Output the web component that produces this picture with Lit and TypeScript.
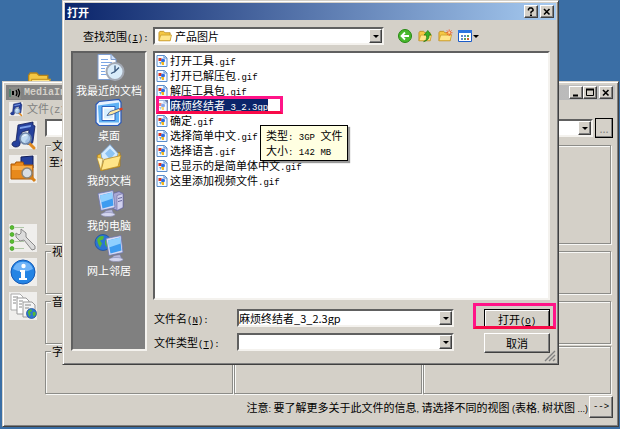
import { LitElement, html, css, svg, nothing } from "lit";
import { customElement, state } from "lit/decorators.js";

const FILES = [
  "打开工具.gif",
  "打开已解压包.gif",
  "解压工具包.gif",
  "麻烦终结者_3_2.3gp",
  "确定.gif",
  "选择简单中文.gif",
  "选择语言.gif",
  "已显示的是简单体中文.gif",
  "这里添加视频文件.gif",
];

const pic = (size: string, box: string, body: unknown) =>
  html`<svg class=${size} viewBox=${box} aria-hidden="true">${body}</svg>`;

const folderShape = svg`
  <path d="M1 3.500 2 2h4l1.500 1.500H13V12H1z" fill="#f4c744" stroke="#b58418" stroke-width=".8"/>
  <path d="M1 12 3 6h11.500L13 12z" fill="#ffe58a" stroke="#c99a28" stroke-width=".8"/>`;

const noteShape = svg`
  <path d="M9 4 24 1v3l2 1-2 15a4 3 0 0 1-6 3 4 3 0 0 1 1-5l1-9-7 2-2 12a4 3 0 0 1-7 2 4 3 0 0 1 3-5z" fill="#26419c" stroke="#101c58" stroke-width=".8"/>
  <path d="m11 6 11-2-.4 2-10.800 2z" fill="#7ea2ec"/>
  <path d="m20 22 5 5" stroke="#e08a20" stroke-width="3" stroke-linecap="round"/>
  <circle cx="16.500" cy="17.500" r="5.500" fill="#b8d8f4" fill-opacity=".85" stroke="#6e86a8" stroke-width="1.600"/>
  <path d="M13.500 16a4 4 0 0 1 4-2" stroke="#fff" fill="none"/>`;

const globeShape = (cx: number, cy: number, r: number) => svg`
  <circle cx=${cx} cy=${cy} r=${r} fill="#2c74d4" stroke="#174a98" stroke-width=".7"/>
  <path transform="translate(${cx - r} ${cy - r}) scale(${r / 8})" d="M2 5c2-4 6-4 7-3l-1 3-3 1 2 3-2 4-2-4zM10 6l4-1 1 4-3 4-2-3z" fill="#54b838"/>`;

const monitorShape = svg`
  <path d="m12 22 6-1 2 5-8 1-3-2z" fill="#b7b9dc" stroke="#70749c" stroke-width=".6"/>
  <ellipse cx="14" cy="26" rx="7" ry="2" fill="#d4d6ee" stroke="#8488b0" stroke-width=".6"/>
  <path d="m4 5 15-3 2 17L7 22z" fill="#d5daf4" stroke="#6d76ae" stroke-width=".8"/>
  <path d="m6 7 12-3 1.500 13L8.500 20z" fill="#3d9cf0"/>
  <path d="m6 7 12-3 .7 6L7 14z" fill="#8fd0ff"/>`;

const PLACES = [
  {
    label: "我最近的文档",
    icon: svg`
      <path d="M4 1h13l5 5v20H4z" fill="#fff" stroke="#7c9cd0"/>
      <path d="M17 1v5h5" fill="#cfe0fa" stroke="#7c9cd0"/>
      <path d="M7 6h7M7 9h11M7 12h8M7 15h4M7 18h4M7 21h5" stroke="#7ca6e4"/>
      <circle cx="21" cy="18" r="8.500" fill="#d9ecfa" stroke="#a3a9b4" stroke-width="2"/>
      <path d="M21 12v6l4-4M21 18l-4 2" stroke="#37567c" stroke-width="1.300" fill="none"/>`,
  },
  {
    label: "桌面",
    icon: svg`
      <path d="m2 6 3-3 20-2 2 3v20l-3 3H5l-3-3z" fill="#e6f2ff" stroke="#2858b8" stroke-width="1.200"/>
      <path d="m4 7 21-3v20H5z" fill="#5fb2f4"/>
      <path d="M9 9h11v12H9z" fill="#d8f0ff" stroke="#fff" stroke-width="2"/>
      <path d="M8 8h13v14H8z" fill="none" stroke="#2a62c0"/>
      <path d="m13 17 3-4 9-3 2 2-9 4z" fill="#ffe9a0" stroke="#2c4f94" stroke-width=".8"/>
      <path d="m25 10 3-1 1 2-3 1z" fill="#e03c20"/>`,
  },
  {
    label: "我的文档",
    icon: svg`
      <path d="m3 12 6-3 3 2 14-2v14L7 27z" fill="#f0c040" stroke="#a87818" stroke-width=".8"/>
      <path d="m7 10 9-9 8 9-3 10-12 2z" fill="#d4ebff" stroke="#6f9cd0" stroke-width=".8"/>
      <path d="m11 10 5-5 5 5-5 6z" fill="#8cc4f4"/>
      <path d="m7 27 3-11 17-4-3 11z" fill="#ffe588" stroke="#b98c24" stroke-width=".8"/>
      <path d="m7 27-4-13 6 1z" fill="#fff2b4" stroke="#b98c24" stroke-width=".6"/>`,
  },
  {
    label: "我的电脑",
    icon: svg`
      <path d="m19 5 6-2 4 2v14l-6 3-4-2z" fill="#a9a8d4" stroke="#65659c" stroke-width=".8"/>
      <path d="m23 7 6-2v14l-6 3z" fill="#d0d0ee" stroke="#65659c" stroke-width=".6"/>
      <path d="m24 10 4-1m-4 4 4-1" stroke="#65659c"/>
      ${monitorShape}`,
  },
  {
    label: "网上邻居",
    icon: svg`
      ${globeShape(9, 9, 8)}
      <g transform="translate(8 0)">${monitorShape}</g>`,
  },
];

@customElement("app-root")
export class AppRoot extends LitElement {
  @state() private selected = 3;

  static styles = css`
    :host {
      display: block;
      position: relative;
      min-height: 100vh;
      overflow: hidden;
      background: #3a6ea5;
      color: #000;
      font: 11px/14px "Noto Sans CJK SC", sans-serif;
    }
    * { box-sizing: border-box; }
    svg { display: block; flex: none; overflow: visible; }
    button, input, select { font: inherit; color: inherit; margin: 0; padding: 0; border-radius: 0; }
    .mono { font-family: "Liberation Mono", monospace; font-size: 9px; line-height: 9px; }
    .small { font-family: "Liberation Sans", sans-serif; font-size: 9px; line-height: 9px; }
    u { text-underline-offset: 1px; }

    .s12 { width: 12px; height: 12px; }
    .s14 { width: 14px; height: 14px; }
    .s28 { width: 28px; height: 28px; }
    .s30 { width: 30px; height: 30px; }
    .shortcut { position: absolute; left: 27px; top: 69px; width: 24px; height: 24px; }

    .frame {
      background: #d4d0c8;
      border: 1px solid;
      border-color: #d4d0c8 #404040 #404040 #d4d0c8;
      box-shadow: inset 1px 1px #fff, inset -1px -1px #808080;
    }
    .raised {
      display: grid;
      place-items: center;
      background: #d4d0c8;
      border: 1px solid;
      border-color: #fff #404040 #404040 #fff;
      box-shadow: inset -1px -1px #808080;
    }
    .sunken {
      background: #fff;
      border: 2px solid;
      border-color: #606060 #f4f2ee #f4f2ee #606060;
    }

    /* media window */
    .media { position: relative; margin: 81px 1px 0 2px; padding: 3px; }
    .bar { display: flex; align-items: center; }
    .bar h1, .bar h2 { flex: 1; margin: 0; font-size: 11px; white-space: nowrap; }
    .media .bar {
      height: 15px;
      gap: 3px;
      padding: 0 2px 0 3px;
      background: linear-gradient(90deg, #808080, #c0c0c0);
      color: #d4d0c8;
    }
    .media .bar h1 { font: bold 10px/14px "Liberation Mono", monospace; }
    .caption { width: 14px; height: 13px; }
    .captions { display: flex; }
    .captions .caption:last-child { margin-left: 2px; }
    .menu { display: flex; align-items: center; gap: 4px; height: 17px; padding-left: 3px; color: #808080; }
    .menu button { border: 0; background: none; white-space: nowrap; }
    .work { display: grid; grid-template-columns: 28px 1fr; gap: 8px; padding: 1px 2px 5px 3px; }
    .tools { display: flex; flex-direction: column; gap: 6px; padding-top: 3px; }
    .tools button { width: 28px; height: 28px; border: 0; background: #efeeec; }
    .tools .apart { margin-top: 35px; }
    .main { display: flex; flex-direction: column; gap: 2px; min-width: 0; }
    .path { display: flex; align-items: center; gap: 2px; }
    .path .combo { flex: 1; }
    .browse { width: 18px; height: 20px; border-color: #000; color: #808080; line-height: 8px; }
    fieldset {
      flex: 1;
      min-width: 0;
      margin: 0 2px 0 0;
      padding: 4px 3px 2px;
      border: 1px solid #8c8c88;
      box-shadow: 1px 1px #f8f8f6, inset 1px 1px #f8f8f6;
      min-height: 48px;
    }
    fieldset.tall { min-height: 104px; }
    legend { margin-left: 2px; padding: 0 1px; line-height: 10px; background: #d4d0c8; }
    .streams { display: flex; }
    .streams fieldset:nth-child(n + 2) { margin-left: -1px; }
    .note { display: flex; align-items: center; justify-content: flex-end; gap: 1px; white-space: nowrap; }
    .note button { width: 24px; height: 22px; }

    /* combo boxes */
    .combo { position: relative; display: flex; align-items: center; height: 18px; min-width: 0; }
    .combo input, .combo select {
      flex: 1;
      min-width: 0;
      height: 14px;
      line-height: 14px;
      border: 0;
      outline: 0;
      background: none;
      appearance: none;
    }
    .combo .drop { position: absolute; right: 0; top: 0; width: 13px; height: 14px; pointer-events: none; }
    .drop::after { content: ""; display: block; border: 3px solid transparent; border-top-color: #000; border-bottom: 0; }

    /* dialog */
    .dialog { position: absolute; top: 0; left: 62px; right: 61px; padding: 2px; }
    .dialog .bar {
      height: 17px;
      gap: 2px;
      padding: 0 2px;
      color: #fff;
      background: linear-gradient(90deg, #0a246a, #a6caf0);
    }
    .body {
      display: grid;
      grid-template-columns: 76px 1fr;
      column-gap: 6px;
      row-gap: 6px;
      padding: 7px 6px 9px;
    }
    .look { padding-left: 12px; line-height: 18px; height: 18px; white-space: nowrap; }
    .where { display: flex; align-items: center; gap: 14px; height: 18px; padding-right: 71px; }
    .where .combo { flex: 1; gap: 3px; padding-left: 3px; }
    .nav { display: flex; gap: 6px; }
    .nav button { display: flex; align-items: center; gap: 1px; height: 14px; border: 0; background: none; }
    .places {
      grid-row: span 2;
      display: flex;
      flex-direction: column;
      gap: 1px;
      margin-bottom: 2px;
      border: 2px solid;
      border-color: #606060 #f4f2ee #f4f2ee #606060;
      background: #808080;
    }
    .places button {
      display: flex;
      flex-direction: column;
      align-items: center;
      border: 0;
      background: none;
      color: #fff;
      white-space: nowrap;
    }
    .list { position: relative; min-height: 249px; }
    .list ul { list-style: none; margin: 0; padding: 0 1px; }
    .list li { display: flex; position: relative; }
    .file { display: flex; align-items: center; gap: 2px; height: 15px; border: 0; background: none; white-space: nowrap; }
    .name { line-height: 13px; }
    .on .name { background: #0a246a; color: #fff; }
    .on svg { opacity: .6; background: #0a246a; }
    .mark { position: absolute; border: 3px solid #ff1488; border-bottom-color: #f80a48; pointer-events: none; }
    li .mark { left: 0; top: -2px; width: 127px; height: 18px; }
    .tip {
      position: absolute;
      left: 105px;
      top: 72px;
      padding: 2px 5px;
      border: 1px solid #000;
      background: #ffffe1;
      box-shadow: 2px 2px 1px #0006;
      line-height: 14px;
      white-space: nowrap;
    }
    .tip p { margin: 0; height: 15px; }
    .form { display: grid; grid-template-columns: 1fr 66px; gap: 30px; padding-top: 3px; }
    .fields { display: flex; flex-direction: column; gap: 6px; min-width: 0; }
    .fields > div { display: grid; grid-template-columns: 84px 1fr; align-items: center; }
    .fields label { padding-left: 1px; white-space: nowrap; }
    .actions { display: flex; flex-direction: column; gap: 4px; }
    .actions div { position: relative; }
    .actions button { width: 100%; height: 20px; }
    .actions .ok { border-color: #000; box-shadow: inset 1px 1px #fff, inset -1px -1px #606060; }
    .actions .mark { left: -11px; right: -6px; top: -6px; bottom: 0; }
    .grip { position: absolute; right: 2px; bottom: 2px; }
  `;

  private text(value: string, latin = "mono") {
    return value
      .split(/([ -~]+)/)
      .map((part) => (/^[ -~]+$/.test(part) ? html`<span class=${latin}>${part}</span>` : part));
  }

  private fileIcon() {
    return pic("s12", "0 0 12 12", svg`
      <path d="M1 .5h7.500L11 3v8.500H1z" fill="#f4faff" stroke="#5a8ccc"/>
      <path d="M8 .5V3h3" fill="none" stroke="#5a8ccc"/>
      <path d="M2.500 3h3v3h-3z" fill="#e0341c"/>
      <circle cx="7" cy="5.500" r="2" fill="#2f6ce0"/>
      <path d="M5 7h3v3H6z" fill="#f0b820"/>
      <path d="M3 7h2v3z" fill="#5aa8f0"/>`);
  }

  private closeIcon() {
    return pic("s12", "0 0 12 12", svg`<path d="m3 3 5.500 5.500M8.500 3 3 8.500" stroke="#000" stroke-width="1.600"/>`);
  }

  private renderMedia() {
    return html`
      <section class="media frame">
        <header class="bar">
          ${pic("s12", "0 0 12 12", svg`
            <path d="M0 0h12v12H0z" fill="#8c8c88"/>
            <path d="M1 2v8" stroke="#1f7a58"/><path d="M3 4h2v4H3z" fill="#000"/>
            <path d="M7 3q2 3 0 6M9 2q3 4 0 8" fill="none" stroke="#000" stroke-width="1.300"/>`)}
          <h1>MediaInfo</h1>
          <div class="captions">
            <button class="caption raised" aria-label="最小化">
              ${pic("s12", "0 0 12 12", svg`<path d="M3 8.500h5" stroke="#000" stroke-width="2"/>`)}
            </button>
            <button class="caption raised" aria-label="最大化">
              ${pic("s12", "0 0 12 12", svg`<path d="M2.500 2.500h7v6h-7z" fill="none" stroke="#000"/><path d="M2 2.500h8" stroke="#000" stroke-width="2"/>`)}
            </button>
            <button class="caption raised" aria-label="关闭">${this.closeIcon()}</button>
          </div>
        </header>
        <nav class="menu">
          ${pic("s14", "0 0 28 28", svg`<path d="M0 0h28v28H0z" fill="#efeeec"/>${noteShape}`)}
          <button>文件<span class="mono">(Z)</span></button>
        </nav>
        <div class="work">
          <div class="tools">
            <button aria-label="打开文件">${pic("s28", "0 0 28 28", noteShape)}</button>
            <button aria-label="打开文件夹">
              ${pic("s28", "0 0 28 28", svg`
                <path d="m12 2 12-1v12H12z" fill="#26419c" stroke="#101c58"/>
                <path d="M2 9h4l1-2h7l1 3h9v14H2z" fill="#e8891c" stroke="#a85808"/>
                <path d="M3 11h20v4H3z" fill="#f8ac48"/>
                <path d="m21 21 5 5" stroke="#d88018" stroke-width="3"/>
                <circle cx="18" cy="18" r="5" fill="#d8dde4" stroke="#8a8478" stroke-width="1.500"/>`)}
            </button>
            <button class="apart" aria-label="选项">
              ${pic("s28", "0 0 28 28", svg`
                <path d="M6 3.500h9M6 10.500h9M6 17.500h9M6 24.500h9" stroke="#b0c8a8"/>
                <g fill="#58c030" stroke="#389018" stroke-width=".6">
                  <circle cx="3" cy="3.500" r="2"/><circle cx="3" cy="10.500" r="2"/>
                  <circle cx="3" cy="17.500" r="2"/><circle cx="3" cy="24.500" r="2"/>
                </g>
                <path d="M7 9v4l4 4 4-1 8 10 3-1 0-3-9-9V9l-5-4v4l-2 2z" fill="#dcdcdc" stroke="#888"/>`)}
            </button>
            <button aria-label="关于">
              ${pic("s28", "0 0 28 28", svg`
                <circle cx="14" cy="14" r="12" fill="#2484e4" stroke="#1458b4"/>
                <path d="M4 11a10.500 10.500 0 0 1 20 0q-10 5-20 0z" fill="#70b4f8"/>
                <path d="M11 12h5v8h2v2h-8v-2h2v-6h-1z" fill="#fff"/><circle cx="14.500" cy="8" r="2.200" fill="#fff"/>`)}
            </button>
            <button aria-label="网络">
              ${pic("s28", "0 0 28 28", svg`
                <path d="M2 2h9l3 3v13H2z" fill="#fff" stroke="#aaa"/>
                <path d="M8 6h9l3 3v13H8z" fill="#fff" stroke="#999"/>
                <path d="M14 10h9l3 3v12H14z" fill="#f4f4f4" stroke="#999"/>
                <path d="M4 5h5M4 8h3M4 11h3M10 9h4M10 12h3M10 15h3M16 13h6M16 16h4" stroke="#888"/>
                ${globeShape(22.5, 21.5, 5)}`)}
            </button>
          </div>
          <div class="main">
            <div class="path">
              <div class="combo sunken">
                <input aria-label="路径" />
                <span class="drop raised"></span>
              </div>
              <button class="browse raised">...</button>
            </div>
            <fieldset class="tall"><legend>文件</legend>至少</fieldset>
            <fieldset><legend>视频</legend></fieldset>
            <fieldset><legend>音频</legend></fieldset>
            <div class="streams">
              <fieldset><legend>字幕</legend></fieldset>
              <fieldset></fieldset>
              <fieldset></fieldset>
            </div>
            <div class="note">
              <span>${this.text("注意: 要了解更多关于此文件的信息, 请选择不同的视图 (表格, 树状图 ...)", "small")}</span>
              <button class="raised"><span class="mono">--&gt;</span></button>
            </div>
          </div>
        </div>
      </section>`;
  }

  private renderDialog() {
    return html`
      <section class="dialog frame" role="dialog" aria-label="打开">
        <header class="bar">
          <h2>打开</h2>
          <button class="caption raised" aria-label="帮助">
            ${pic("s12", "0 0 12 12", svg`<path d="M3.500 4.500V3.200L4.600 2h2.200L8 3.200v1.300L6 6v1.500" fill="none" stroke="#000" stroke-width="1.500"/><path d="M5 8.500h2v1.500H5z"/>`)}
          </button>
          <button class="caption raised" aria-label="关闭">${this.closeIcon()}</button>
        </header>
        <div class="body">
          <label class="look" for="where">查找范围<span class="mono">(<u>I</u>):</span></label>
          <div class="where">
            <div class="combo sunken">
              ${pic("s14", "0 0 15 14", folderShape)}
              <select id="where"><option>产品图片</option></select>
              <span class="drop raised"></span>
            </div>
            <div class="nav">
              <button aria-label="后退">
                ${pic("s14", "0 0 14 14", svg`
                  <circle cx="7" cy="7" r="6.500" fill="#48b82c" stroke="#268812"/>
                  <path d="M11 7H4M7 3.500 3.500 7 7 10.500" fill="none" stroke="#fff" stroke-width="1.800"/>`)}
              </button>
              <button aria-label="向上">
                ${pic("s14", "0 0 15 14", svg`${folderShape}
                  <path d="M6 13q4-1 3-7H6.500L10.500 1l3.500 5h-2q0 6-6 7z" fill="#38b028" stroke="#1c7810" stroke-width=".7"/>`)}
              </button>
              <button aria-label="新建文件夹">
                ${pic("s14", "0 0 15 14", svg`${folderShape}
                  <path d="M12 0v7M8.500 3.500h7M9.500 1l5 5M14.500 1l-5 5" stroke="#f06030"/>
                  <circle cx="12" cy="3.500" r="1.200" fill="#ffe0a0"/>`)}
              </button>
              <button aria-label="查看">
                ${pic("s14", "0 0 14 14", svg`
                  <path d="M.5 1.500h13v11H.5z" fill="#fff" stroke="#1c5cc8"/><path d="M0 1h14v3H0z" fill="#2c74e0"/>
                  <path d="M3 6h2v2H3zM6 6h2v2H6zM3 9h2v2H3z" fill="#6088c8"/>
                  <path d="M9 6h2v2H9zM6 9h2v2H6z" fill="#5aa05a"/><path d="M9 9h2v2H9z" fill="#d06030"/>`)}
                <span class="drop"></span>
              </button>
            </div>
          </div>
          <nav class="places">
            ${PLACES.map((p) => html`<button>${pic("s30", "0 0 30 29", p.icon)}${p.label}</button>`)}
          </nav>
          <div class="list sunken">
            <ul>
              ${FILES.map((name, i) => html`
                <li>
                  <button
                    class=${i === this.selected ? "file on" : "file"}
                    aria-pressed=${i === this.selected}
                    @click=${() => (this.selected = i)}
                  >${this.fileIcon()}<span class="name">${this.text(name)}</span></button>
                  ${i === this.selected ? html`<span class="mark"></span>` : nothing}
                </li>`)}
            </ul>
            <div class="tip" role="tooltip">
              <p>${this.text("类型: 3GP 文件")}</p>
              <p>${this.text("大小: 142 MB")}</p>
            </div>
          </div>
          <div class="form">
            <div class="fields">
              <div>
                <label for="name">文件名<span class="mono">(<u>N</u>):</span></label>
                <div class="combo sunken">
                  <input id="name" .value=${FILES[this.selected]} />
                  <span class="drop raised"></span>
                </div>
              </div>
              <div>
                <label for="type">文件类型<span class="mono">(<u>T</u>):</span></label>
                <div class="combo sunken">
                  <select id="type"><option></option></select>
                  <span class="drop raised"></span>
                </div>
              </div>
            </div>
            <div class="actions">
              <div>
                <button class="ok raised"><span>打开<span class="mono">(<u>O</u>)</span></span></button>
                <span class="mark"></span>
              </div>
              <button class="raised">取消</button>
            </div>
          </div>
        </div>
        <div class="grip">
          ${pic("s12", "0 0 12 12", svg`<path d="M1 11 11 1M5 11l6-6M9 11l2-2" stroke="#808080" stroke-width="1.400"/>`)}
        </div>
      </section>`;
  }

  render() {
    return html`
      ${pic("shortcut", "0 0 15 14", folderShape)}
      ${this.renderMedia()}
      ${this.renderDialog()}`;
  }
}
